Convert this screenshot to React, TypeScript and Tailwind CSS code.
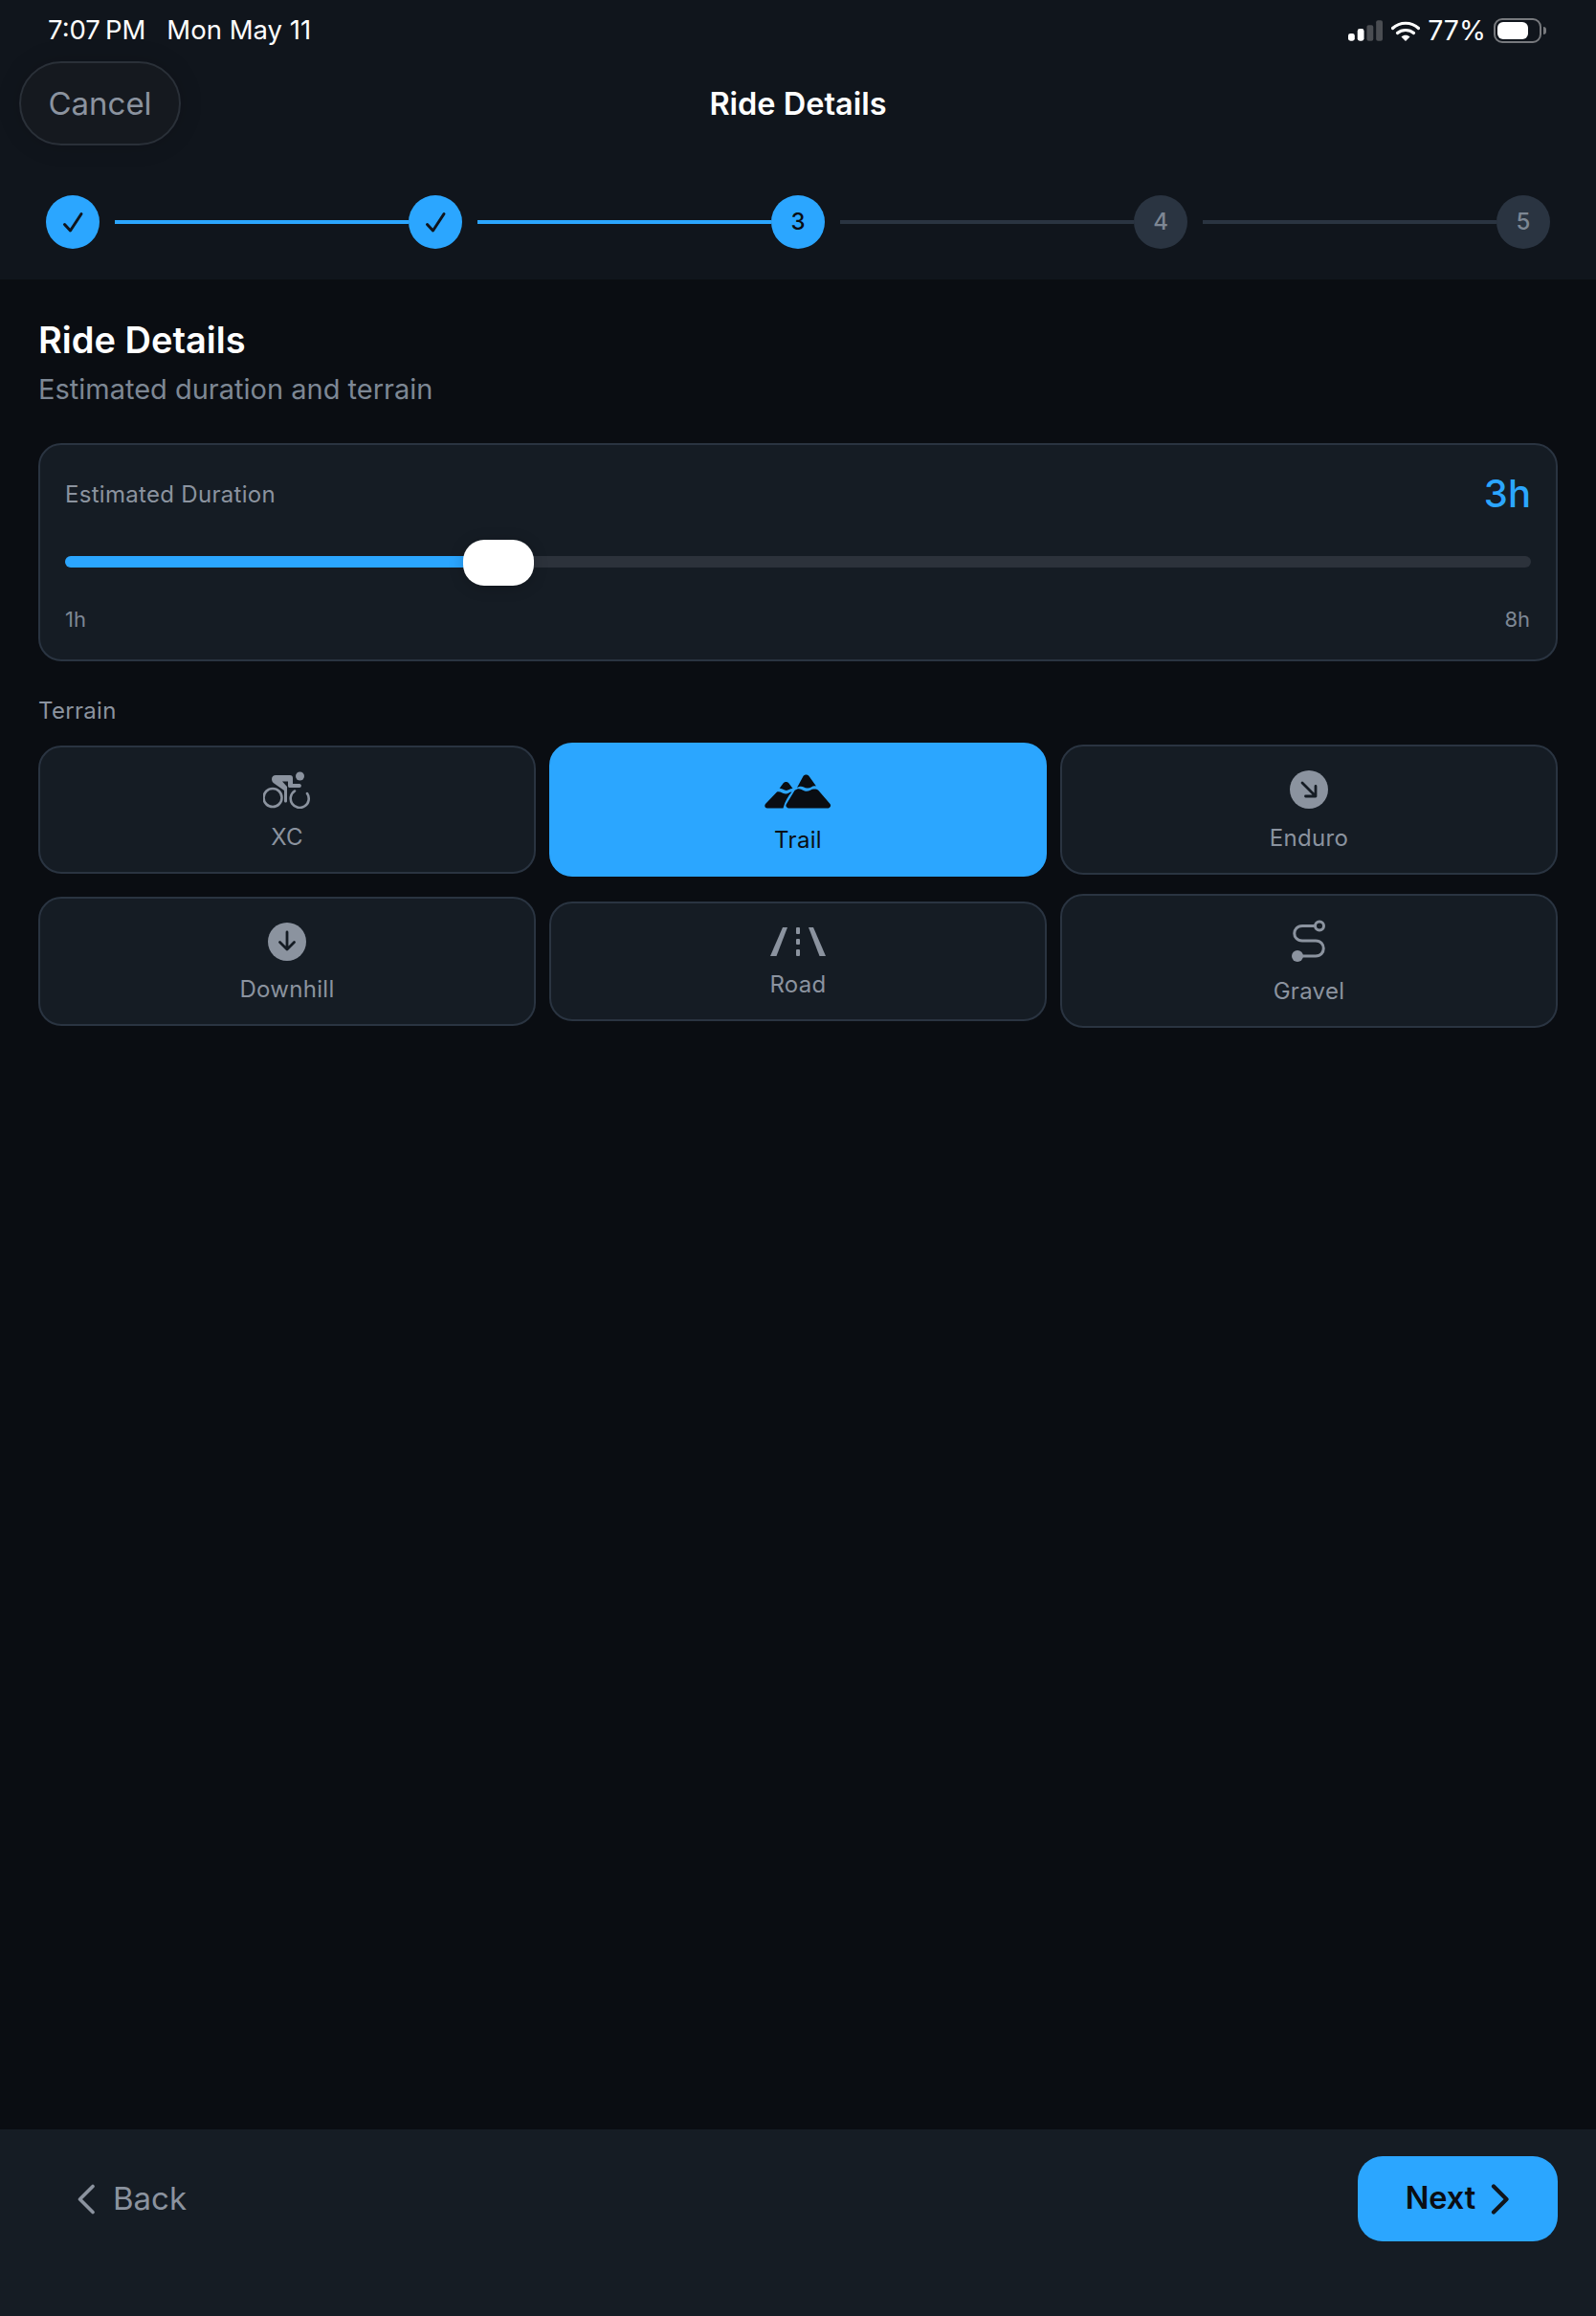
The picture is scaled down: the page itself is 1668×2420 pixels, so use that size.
import type { ReactNode } from 'react'

function StatusIcons() {
  return (
    <div className="flex items-center">
      <svg width="36" height="22" viewBox="0 0 37 22" aria-hidden>
        <rect x="0" y="14" width="7" height="8" rx="2.5" fill="#fff" />
        <rect x="10" y="9" width="7" height="13" rx="2.5" fill="#fff" />
        <rect x="20" y="5" width="7" height="17" rx="2" fill="#4a4d52" />
        <rect x="30" y="0" width="7" height="22" rx="2" fill="#4a4d52" />
      </svg>
      <svg className="ml-[9px]" width="30" height="21" viewBox="0 0 30 21" aria-hidden>
        <path d="M1.5 7.5C9 .5 21 .5 28.500 7.500" fill="none" stroke="#fff" strokeWidth="3.200" strokeLinecap="round" />
        <path d="M6.500 12.500C11 8.500 19 8.500 23.500 12.500" fill="none" stroke="#fff" strokeWidth="3.200" strokeLinecap="round" />
        <path d="M10.500 16.500C13 14.200 17 14.200 19.500 16.500L15 21Z" fill="#fff" />
      </svg>
      <span className="ml-[8px] text-[28.500px] leading-none text-white">77%</span>
      <div className="ml-[8px] flex items-center">
        <div className="flex h-[26px] w-[50px] items-center rounded-[9px] border-2 border-[#77797d] p-[2px]">
          <div className="h-[18px] w-[32px] rounded-[6px] bg-white" />
        </div>
        <div className="ml-[2px] h-[8px] w-[3px] rounded-r-full bg-[#77797d]" />
      </div>
    </div>
  )
}

function Step({ n, state }: { n: number; state: 'done' | 'current' | 'todo' }) {
  const tone =
    state === 'todo' ? 'bg-[#2a3441] text-[#7d8794]' : 'bg-[#2ba6ff] text-[#0a0d12]'
  return (
    <div className={`flex h-[56px] w-[56px] shrink-0 items-center justify-center rounded-full text-[24px] font-medium ${tone}`}>
      {state === 'done' ? (
        <svg width="24" height="24" viewBox="0 0 24 24" aria-hidden>
          <path d="M3.500 14.500L9.500 21L21 3.500" fill="none" stroke="#10151c" strokeWidth="3" strokeLinecap="round" strokeLinejoin="round" />
        </svg>
      ) : (
        n
      )}
    </div>
  )
}

function Stepper() {
  return (
    <div className="mt-[52px] flex items-center px-[48px]">
      <Step n={1} state="done" />
      <div className="ml-[16px] h-[4px] flex-1 bg-[#2ba6ff]" />
      <Step n={2} state="done" />
      <div className="ml-[16px] h-[4px] flex-1 bg-[#2ba6ff]" />
      <Step n={3} state="current" />
      <div className="ml-[16px] h-[4px] flex-1 bg-[#2a3441]" />
      <Step n={4} state="todo" />
      <div className="ml-[16px] h-[4px] flex-1 bg-[#2a3441]" />
      <Step n={5} state="todo" />
    </div>
  )
}

function BikeIcon() {
  return (
    <svg width="50" height="39" viewBox="1 0 50 39" aria-hidden>
      <circle cx="11" cy="27.500" r="9.500" fill="none" stroke="#8b939f" strokeWidth="2.600" />
      <path d="M34 20.500A9.500 9.500 0 1 0 47 23" fill="none" stroke="#8b939f" strokeWidth="2.600" strokeLinecap="round" />
      <circle cx="39.500" cy="5" r="4.500" fill="#8b939f" />
      <path d="M10 8C10 5.500 12 4 14 4H29C31 4 32 5 32 7V13H39C41.500 13 41.500 17 39 17H28.500C27.500 17 27 16 27 15V10.500H21L26 16V31C26 33 23 33 23 31V20L13 13C11 12 10 10 10 8Z" fill="#8b939f" />
    </svg>
  )
}

function MountainsIcon() {
  return (
    <svg width="70" height="36" viewBox="0 0 70 36" aria-hidden>
      <path d="M19.500 9.500C21 7.500 24 7.500 25.500 9.500L29.500 15C26 14.500 25 18 21 16.500C18 15.500 16.500 14.500 15.500 15ZM13 18.500C17 17.500 18 20.500 22 20.500C25 20.500 26 18.500 28.500 18.500C24.500 23 21.500 28 19.500 35.500H3C.5 35.500 -.5 33 1 31Z" fill="#0a0d12" />
      <path d="M40.500 2C42 0 45 0 46.500 2L54 12.500C50 11 48.500 15 44.500 14.500C40.500 14 39 11 34 14ZM31.500 17C36 13.500 38 16 42 17.500C46 19 49 15 52 15.500C54 15.500 55.500 16 56 16.500L68.500 31C70 33 68.500 35.500 66 35.500H26C23 35.500 21.500 33 23 31Z" fill="#0a0d12" />
    </svg>
  )
}

function DownIcon() {
  return (
    <svg width="40" height="40" viewBox="0 0 40 40" aria-hidden>
      <circle cx="20" cy="20" r="20" fill="#8b939f" />
      <path d="M20 10V28M12.500 20.500L20 28L27.500 20.500" fill="none" stroke="#151c24" strokeWidth="2.800" strokeLinecap="round" strokeLinejoin="round" />
    </svg>
  )
}

function DiagonalIcon() {
  return (
    <svg width="40" height="40" viewBox="0 0 40 40" aria-hidden>
      <circle cx="20" cy="20" r="20" fill="#8b939f" />
      <path d="M13 13L27 27M27 16.500V27H16.500" fill="none" stroke="#151c24" strokeWidth="2.800" strokeLinecap="round" strokeLinejoin="round" />
    </svg>
  )
}

function RoadIcon() {
  return (
    <svg width="58" height="30" viewBox="0 0 58 30" aria-hidden>
      <path d="M13 0H18L6.500 30H0Z" fill="#8b939f" />
      <path d="M40 0H45L58 30H51.500Z" fill="#8b939f" />
      <rect x="27" y="0" width="4" height="7" rx="1" fill="#8b939f" />
      <rect x="27" y="12" width="4" height="6" rx="1" fill="#8b939f" />
      <rect x="27" y="23" width="4" height="7" rx="1" fill="#8b939f" />
    </svg>
  )
}

function RouteIcon() {
  return (
    <svg width="36" height="44" viewBox="0 0 36 44" aria-hidden>
      <path d="M25 6.500H11C0 6.500 0 22 11 22H25C36 22 36 38 25 38H6" fill="none" stroke="#8b939f" strokeWidth="3" />
      <circle cx="29" cy="6.500" r="4.500" fill="#151c24" stroke="#8b939f" strokeWidth="3" />
      <circle cx="6" cy="38" r="6" fill="#8b939f" />
    </svg>
  )
}

function TerrainCard({
  label,
  icon,
  iconBox,
  active = false,
}: {
  label: string
  icon: ReactNode
  iconBox: string
  active?: boolean
}) {
  const tone = active
    ? 'border-[#2ba6ff] bg-[#2ba6ff] text-[#0a0d12]'
    : 'border-[#2a3441] bg-[#151c24] text-[#8b939f]'
  return (
    <div className={`flex flex-col items-center gap-[13px] rounded-[24px] border-2 pt-[25px] pb-[24px] ${tone}`}>
      <div className={`flex items-start justify-center ${iconBox}`}>{icon}</div>
      <span className="text-[24px] leading-[24px] tracking-[0.3px]">{label}</span>
    </div>
  )
}

export default function App() {
  return (
    <div
      className="flex h-[2420px] w-[1668px] flex-col overflow-hidden bg-[#0a0d12]"
      style={{ fontFamily: 'Inter, "Liberation Sans", sans-serif' }}
    >
      <header className="h-[292px] shrink-0 bg-[#10151c]">
        <div className="flex h-[64px] items-center justify-between pr-[52px] pl-[50px]">
          <div className="flex items-center text-[27.500px] leading-none text-white">
            <span>7:07&#8201;PM</span>
            <span className="ml-[22px]">Mon May 11</span>
          </div>
          <StatusIcons />
        </div>
        <div className="grid grid-cols-[1fr_auto_1fr] items-center pl-[20px]">
          <div>
            <button className="flex h-[88px] w-[169px] items-center justify-center rounded-full border-2 border-[#2a3038] bg-[#15191f] pt-[2px] text-[33px] text-[#8b939f] shadow-[0_0_24px_rgba(0,0,0,0.15)]">
              Cancel
            </button>
          </div>
          <h2 className="pt-[2px] pr-[20px] text-[32.500px] font-semibold text-white">Ride Details</h2>
          <div />
        </div>
        <Stepper />
      </header>

      <main className="flex-1 px-[40px] pt-[41px]">
        <h1 className="text-[38px] leading-[44px] font-semibold text-white">Ride Details</h1>
        <p className="mt-[10px] text-[29px] leading-[40px] text-[#7d8794]">Estimated duration and terrain</p>

        <section className="mt-[36px] h-[228px] rounded-[24px] border-2 border-[#2a3441] bg-[#151c24] px-[26px] pt-[27px]">
          <div className="flex h-[50px] items-center justify-between">
            <span className="text-[24px] tracking-[0.3px] text-[#8b939f]">Estimated Duration</span>
            <span className="-mt-[2px] text-[40px] font-medium text-[#2ba6ff]">3h</span>
          </div>
          <div className="relative mt-[22px] flex h-[48px] items-center">
            <div className="mb-[2px] h-[12px] w-full overflow-hidden rounded-full bg-[#2c323b]">
              <div className="h-full w-[430px] bg-[#2ba6ff]" />
            </div>
            <div className="absolute top-0 left-[416px] h-[48px] w-[74px] rounded-[22px] bg-white shadow-[0_2px_16px_rgba(0,0,0,0.2)]" />
          </div>
          <div className="mt-[21px] flex justify-between pr-[1px] text-[22px] leading-[28px] text-[#7d8794]">
            <span>1h</span>
            <span>8h</span>
          </div>
        </section>

        <p className="mt-[36px] text-[24px] leading-[32px] tracking-[0.3px] text-[#8b939f]">Terrain</p>
        <div className="mt-[17px] grid grid-cols-3 items-center gap-x-[14px] gap-y-[18px]">
          <TerrainCard label="XC" icon={<BikeIcon />} iconBox="h-[44px]" />
          <TerrainCard label="Trail" icon={<MountainsIcon />} iconBox="h-[50px] pt-[6px]" active />
          <TerrainCard label="Enduro" icon={<DiagonalIcon />} iconBox="h-[46px]" />
          <TerrainCard label="Downhill" icon={<DownIcon />} iconBox="h-[45px]" />
          <TerrainCard label="Road" icon={<RoadIcon />} iconBox="h-[35px]" />
          <TerrainCard label="Gravel" icon={<RouteIcon />} iconBox="h-[50px]" />
        </div>
      </main>

      <footer className="flex h-[195px] shrink-0 items-start justify-between bg-[#151c24] pt-[28px] pr-[40px] pl-[80px]">
        <button className="flex h-[89px] items-center gap-[18px] text-[33px] text-[#8b939f]">
          <svg width="20" height="32" viewBox="0 0 20 32" aria-hidden>
            <path d="M17 2.500L3.500 16L17 29.500" fill="none" stroke="#8b939f" strokeWidth="3.600" strokeLinecap="round" strokeLinejoin="round" />
          </svg>
          Back
        </button>
        <button className="flex h-[89px] w-[209px] items-center justify-center gap-[16px] rounded-[26px] bg-[#2ba6ff] text-[32.500px] font-semibold text-[#0a0d12]">
          Next
          <svg width="20" height="32" viewBox="0 0 20 32" aria-hidden>
            <path d="M3 2.500L16.500 16L3 29.500" fill="none" stroke="#10151c" strokeWidth="4.200" strokeLinecap="round" strokeLinejoin="round" />
          </svg>
        </button>
      </footer>
    </div>
  )
}
